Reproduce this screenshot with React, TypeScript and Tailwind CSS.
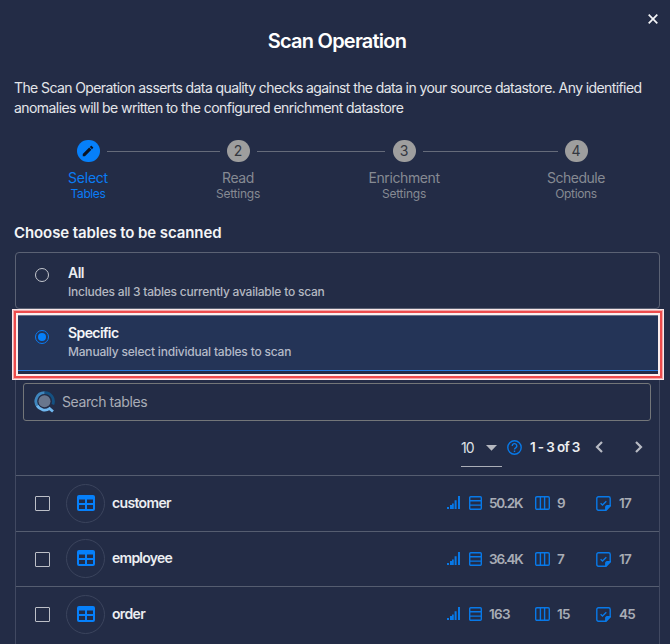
import React from "react";

const steps = [
  { n: "1", title: "Select", sub: "Tables", t: "tracking-[-0.25px]", s: "tracking-[-0.4px]" },
  { n: "2", title: "Read", sub: "Settings", t: "tracking-[-0.4px]", s: "tracking-[-0.25px]" },
  { n: "3", title: "Enrichment", sub: "Settings", t: "tracking-[-0.4px]", s: "tracking-[-0.25px]" },
  { n: "4", title: "Schedule", sub: "Options", t: "tracking-[-0.5px]", s: "tracking-[-0.35px]" },
];

const lines = ["w-[113px]", "w-[128px]", "w-[135px]"];

const rows = [
  { name: "customer", records: "50.2K", fields: "9", checks: "17", h: "h-[56px]", track: "tracking-[-0.65px]", rec: "tracking-[-1.2px]", avatar: "mt-[8px]", text: "mt-[17px]" },
  { name: "employee", records: "36.4K", fields: "7", checks: "17", h: "h-[55px]", track: "tracking-[-0.75px]", rec: "tracking-[-1.2px]", avatar: "mt-[7px]", text: "mt-[16px]" },
  { name: "order", records: "163", fields: "15", checks: "45", h: "h-[58px]", track: "tracking-[-0.65px]", rec: "tracking-[-0.7px]", avatar: "mt-[8px]", text: "mt-[17px]" },
];

function Pencil() {
  return (
    <svg width="14" height="14" viewBox="0 0 24 24" fill="#0b1424">
      <path d="M20.71 7.04c.39-.39.39-1.04 0-1.41l-2.34-2.34c-.37-.39-1.02-.39-1.41 0l-1.84 1.83 3.75 3.75M3 17.25V21h3.75L17.81 9.93l-3.75-3.75L3 17.25z" />
    </svg>
  );
}

function Stepper() {
  return (
    <div className="mt-[22px] flex h-[62px]">
      <div className="w-[50px] shrink-0" />
      {steps.map((s, i) => (
        <React.Fragment key={s.n}>
          <div className={"flex w-[76px] shrink-0 flex-col items-center " + (i === 0 ? "text-[#0a7cf5]" : "text-[#868a93]")}>
            <div className={"flex h-[22px] w-[23px] items-center justify-center rounded-full text-[14px] text-[#33373f] " + (i === 0 ? "bg-[#0680fb]" : "bg-[#9e9e9e] pb-px")}>
              {i === 0 ? <Pencil /> : s.n}
            </div>
            <div className={"mt-[7px] text-[14px] leading-[18px] " + s.t}>{s.title}</div>
            <div className={"text-[12px] leading-[14px] " + s.s}>{s.sub}</div>
          </div>
          {i < 3 && (
            <div className={"mt-[11px] flex h-px shrink-0 justify-center " + (i === 0 ? "w-[74px]" : i === 1 ? "w-[90px]" : "w-[96px]")}>
              <div className={"h-px shrink-0 bg-[#656b7a] " + lines[i]} />
            </div>
          )}
        </React.Fragment>
      ))}
    </div>
  );
}

function Radio({ on }: { on?: boolean }) {
  return (
    <div className={"flex h-[14px] w-[14px] shrink-0 items-center justify-center rounded-full border " + (on ? "border-[#0a7cf5]" : "border-[#c4c7ce]")}>
      {on && <div className="h-[8px] w-[8px] rounded-full bg-[#0680fb]" />}
    </div>
  );
}

function SearchLogo() {
  return (
    <svg width="22" height="22" viewBox="0 0 22 22" fill="none">
      <circle cx="10.5" cy="10.3" r="6" fill="#69768d" />
      <path d="M10.5 1.6A8.7 8.7 0 0 1 18.8 13.5" stroke="#145182" strokeWidth="2.8" />
      <path d="M4.5 16.5A8.7 8.7 0 0 1 10.5 1.6" stroke="#3f86bd" strokeWidth="2.8" />
      <path d="M3.2 14.8A8.8 8.8 0 0 0 15.5 17.6L19 20.5" stroke="#70b7ef" strokeWidth="2.8" />
    </svg>
  );
}

function TableIcon() {
  return (
    <svg width="18" height="16" viewBox="0 0 18 16" fill="none">
      <path fillRule="evenodd" fill="#0680fb" d="M2 0h14a2 2 0 0 1 2 2v12a2 2 0 0 1-2 2H2a2 2 0 0 1-2-2V2a2 2 0 0 1 2-2zM2 4.5v3.5h6V4.5zM10 4.5v3.5h6V4.5zM2 10v4h6v-4zM10 10v4h6v-4z" />
    </svg>
  );
}

function SignalIcon() {
  return (
    <svg width="13" height="13" viewBox="0 0 13 13" fill="#0879e8">
      <path d="M0 11h2v2H0zM3 9h2v4H3zM5 7.5h1.8V13H5zM7.6 4.3h2V13h-2zM11 0h2v13h-2z" />
    </svg>
  );
}

function RowsIcon() {
  return (
    <svg width="13" height="14" viewBox="0 0 13 14" fill="none" stroke="#0879e8" strokeWidth="1.4">
      <rect x="0.7" y="0.7" width="11.6" height="12.6" rx="1" />
      <path d="M0.6 4.8H12.4M0.6 9.1H12.4" />
    </svg>
  );
}

function ColumnsIcon() {
  return (
    <svg width="15" height="14" viewBox="0 0 15 14" fill="none" stroke="#0879e8" strokeWidth="1.4">
      <rect x="0.7" y="0.7" width="13.6" height="12.6" rx="1.2" />
      <path d="M5.4 0.6V13.4M9.6 0.6V13.4" />
    </svg>
  );
}

function NoteIcon() {
  return (
    <svg width="15" height="15" viewBox="0 0 15 15" fill="none" stroke="#0879e8" strokeWidth="1.4">
      <path d="M9.8 14.2H2.4A1.6 1.6 0 0 1 .8 12.6V2.4A1.6 1.6 0 0 1 2.4.8h10.2a1.6 1.6 0 0 1 1.6 1.6v7.4z" />
      <path d="M9.8 14.2V11a1.2 1.2 0 0 1 1.2-1.2h3.2z" fill="#0879e8" />
      <path d="M4.6 7.3l1.9 1.8 3.8-3.8" />
    </svg>
  );
}

function HelpIcon() {
  return (
    <svg width="15" height="15" viewBox="0 0 15 15" fill="none" stroke="#0879e8" strokeWidth="1.4">
      <circle cx="7.5" cy="7.5" r="6.7" />
      <path d="M5.2 6a2.3 2.3 0 1 1 3.5 1.9c-.8.5-1.2.8-1.2 1.6M7.5 10.6v1.5" />
    </svg>
  );
}

export default function App() {
  return (
    <div className="relative h-[644px] w-[670px] overflow-hidden bg-[#232c46] font-['Inter','Liberation_Sans',sans-serif] text-white">
      <button aria-label="Close" className="absolute left-[648px] top-[14px]">
        <svg width="10" height="10" viewBox="0 0 10 10" stroke="#f4f5f7" strokeWidth="1.7">
          <path d="M.7.7l8.6 8.6M9.3.7L.7 9.3" />
        </svg>
      </button>
      <h1 className="pl-[4px] pt-[28px] text-center text-[20px] font-semibold leading-[26px] tracking-[-0.78px]">Scan Operation</h1>
      <p className="ml-[14px] mt-[24px] whitespace-nowrap text-[14px] leading-[20px] text-[#e4e6ea]">
        <span className="tracking-[-0.6px]">The Scan Operation asserts data quality checks against the data in your source datastore. Any identified</span>
        <br />
        <span className="tracking-[-0.56px]">anomalies will be written to the configured enrichment datastore</span>
      </p>
      <Stepper />
      <h2 className="ml-[14px] mt-[21px] text-[15px] font-semibold leading-[20px] tracking-[-0.09px] text-[#f4f5f7]">Choose tables to be scanned</h2>

      <div className="ml-[15px] mt-[9px] h-[57px] w-[645px] rounded-[4px] border border-[#5b6274]">
        <div className="flex pl-[19px] pt-[10px]">
          <div className="pt-[5px]"><Radio /></div>
          <div className="ml-[19px]">
            <div className="text-[14px] font-semibold leading-[20px] tracking-[-0.5px] text-[#eceef1]">All</div>
            <div className="text-[12px] font-medium leading-[17px] tracking-[-0.22px] text-[#b4b8c1]">Includes all 3 tables currently available to scan</div>
          </div>
        </div>
      </div>
      <div className="flex h-[71px] pl-[12px]">
        <div className="h-[71px] w-[652px] border border-[#f9e8e9] bg-[#f3a6a8] p-px">
          <div className="h-full w-full bg-[#ed4b4c] p-[2px]">
            <div className="h-full w-full border-2 border-[#fbeeee] bg-[#232c46]">
              <div className="flex h-[56px] border-b border-t border-b-[#2479df] border-t-[#68738a] bg-[#243457] pl-[17px] pt-[7px]">
                <div className="pt-[7px]"><Radio on /></div>
                <div className="ml-[19px]">
                  <div className="text-[14px] font-semibold leading-[20px] tracking-[-0.6px] text-[#f4f5f7]">Specific</div>
                  <div className="text-[12px] font-medium leading-[18px] tracking-[-0.2px] text-[#b4bac8]">Manually select individual tables to scan</div>
                </div>
              </div>
            </div>
          </div>
        </div>
      </div>

      <div className="ml-[15px] w-[645px] border-x border-[#414961]">
        <div className="h-[3px]" />
        <div className="ml-[7px] flex h-[38px] w-[628px] items-center rounded-[3px] border border-[#737679] pl-[10px]">
          <SearchLogo />
          <div className="ml-[6px] pb-px text-[14px] tracking-[-0.4px] text-[#a9adb7]">Search tables</div>
        </div>
        <div className="flex h-[55px] border-b border-[#555d70] pl-[445px]">
          <div className="mt-[16px] flex h-[30px] w-[41px] shrink-0 border-b border-[#abaeb7]">
            <span className="w-[25px] text-[14px] leading-[22px] tracking-[-0.9px] text-[#dfe1e5]">10</span>
            <svg className="mt-[8px] shrink-0" width="11" height="6" viewBox="0 0 11 6" fill="#b5b8c0"><path d="M0 0h11L5.5 5.7z" /></svg>
          </div>
          <div className="ml-[5px] mt-[19px]"><HelpIcon /></div>
          <div className="ml-[8px] mt-[15px] w-[65px] whitespace-nowrap text-[13.5px] font-semibold leading-[22px] tracking-[-0.65px] text-[#eceef1]">1 - 3 of 3</div>
          <svg className="mt-[20px]" width="8" height="12" viewBox="0 0 8 12" fill="none" stroke="#b7bac3" strokeWidth="2.2"><path d="M7 1L2 6l5 5" /></svg>
          <svg className="ml-[32px] mt-[20px]" width="8" height="12" viewBox="0 0 8 12" fill="none" stroke="#b7bac3" strokeWidth="2.2"><path d="M1 1l5 5-5 5" /></svg>
        </div>
        {rows.map((r) => (
          <div key={r.name} className={"flex items-start border-b border-[#555d70] pl-[19px] " + r.h}>
            <div className="mt-[20px] h-[15px] w-[15px] shrink-0 rounded-[1px] border border-[#bcbfc7]" />
            <div className={"ml-[16px] flex h-[39px] w-[39px] shrink-0 items-center justify-center rounded-full border border-[#3b445d] pb-[2px] " + r.avatar}>
              <TableIcon />
            </div>
            <div className={"ml-[7px] w-[335px] text-[14px] font-semibold leading-[20px] text-[#eceef1] " + r.track + " " + r.text}>{r.name}</div>
            <div className="mt-[20px] grid grid-cols-[22px_20px_46px_22px_39px_23px_30px] text-[13.5px] font-semibold leading-[15px] tracking-[-0.7px] text-[#a9adb6]">
              <SignalIcon />
              <RowsIcon />
              <span className={r.rec}>{r.records}</span>
              <ColumnsIcon />
              <span>{r.fields}</span>
              <NoteIcon />
              <span>{r.checks}</span>
            </div>
          </div>
        ))}
      </div>
    </div>
  );
}
